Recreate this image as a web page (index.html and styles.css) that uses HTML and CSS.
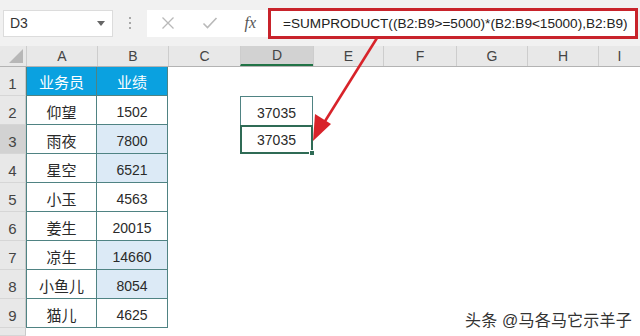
FILE: index.html
```html
<!DOCTYPE html>
<html lang="zh-CN">

<head>
    <meta charset="UTF-8">
    <meta name="viewport" content="width=device-width, initial-scale=1.0">
    <title>SUMPRODUCT</title>
    <link rel="stylesheet" href="styles.css">
</head>

<body>
    <div class="toolbar">
        <div class="namebox">
            <span>D3</span>
            <svg width="8" height="5" viewBox="0 0 8 5"><path d="M0 0h8L4 5z" fill="#666"/></svg>
        </div>
        <div class="sep">
            <i></i><i></i><i></i>
        </div>
        <div class="tools">
            <svg width="14" height="14" viewBox="0 0 14 14"><path d="M1.5 1.5l11 11M12.5 1.5l-11 11" stroke="#b9b9b9" stroke-width="1.3"/></svg>
            <svg width="16" height="14" viewBox="0 0 16 14"><path d="M1.5 7.5l4 4 9-9.5" stroke="#b9b9b9" stroke-width="1.6" fill="none"/></svg>
            <span class="fx">fx</span>
        </div>
        <div class="formula">=SUMPRODUCT((B2:B9&gt;=5000)*(B2:B9&lt;15000),B2:B9)</div>
    </div>

    <div class="sheet">
        <div class="row head">
            <div class="corner"><svg width="14" height="14" viewBox="0 0 14 14"><path d="M14 0v14H0z" fill="#b7b7b7"/></svg></div>
            <div class="col">A</div>
            <div class="col">B</div>
            <div class="col">C</div>
            <div class="col active">D</div>
            <div class="col">E</div>
            <div class="col">F</div>
            <div class="col">G</div>
            <div class="col">H</div>
            <div class="col">I</div>
        </div>
        <div class="row">
            <div class="num">1</div>
            <div class="cell th first">业务员</div>
            <div class="cell th">业绩</div>
        </div>
        <div class="row">
            <div class="num">2</div>
            <div class="cell first">仰望</div>
            <div class="cell">1502</div>
            <div class="blank"></div>
            <div class="cell result">37035</div>
        </div>
        <div class="row">
            <div class="num active">3</div>
            <div class="cell first">雨夜</div>
            <div class="cell hl">7800</div>
            <div class="blank"></div>
            <div class="cell selected">37035<span class="handle"></span></div>
        </div>
        <div class="row">
            <div class="num">4</div>
            <div class="cell first">星空</div>
            <div class="cell hl">6521</div>
        </div>
        <div class="row">
            <div class="num">5</div>
            <div class="cell first">小玉</div>
            <div class="cell">4563</div>
        </div>
        <div class="row">
            <div class="num">6</div>
            <div class="cell first">姜生</div>
            <div class="cell">20015</div>
        </div>
        <div class="row">
            <div class="num">7</div>
            <div class="cell first">凉生</div>
            <div class="cell hl">14660</div>
        </div>
        <div class="row">
            <div class="num">8</div>
            <div class="cell first">小鱼儿</div>
            <div class="cell hl">8054</div>
        </div>
        <div class="row">
            <div class="num">9</div>
            <div class="cell first">猫儿</div>
            <div class="cell">4625</div>
        </div>
        <div class="row last">
            <div class="num"></div>
        </div>
    </div>

    <svg class="arrow" width="640" height="336" viewBox="0 0 640 336">
        <path d="M377 38L322 126" stroke="#d8232a" stroke-width="2.6" fill="none"/>
        <path d="M313 141L315 114L331 124z" fill="#d8232a"/>
    </svg>

    <div class="mark">头条 @马各马它示羊子</div>
</body>

</html>
```

FILE: styles.css
```css
* {
    margin: 0;
    padding: 0;
    box-sizing: border-box;
}

body {
    position: relative;
    width: 640px;
    height: 336px;
    overflow: hidden;
    background-color: white;
    font-family: "Liberation Sans", "Noto Sans CJK SC", sans-serif;
    color: #222;
}

.toolbar {
    display: flex;
    align-items: center;
    height: 46px;
    padding-left: 3px;
    background-color: #f1f1f1;
}

.namebox {
    display: flex;
    align-items: center;
    justify-content: space-between;
    width: 110px;
    height: 27px;
    padding: 0 7px 0 6px;
    background-color: white;
    border: 1px solid #dcdcdc;
    font-size: 14px;
    color: #333;
}

.sep {
    display: flex;
    flex-direction: column;
    align-items: center;
    gap: 3px;
    width: 34px;
}

.sep i {
    width: 2px;
    height: 2px;
    background-color: #a8a8a8;
}

.tools {
    display: flex;
    align-items: center;
    justify-content: space-between;
    width: 121px;
    height: 27px;
    padding: 0 12px 0 14px;
    background-color: white;
}

.fx {
    font-family: "Liberation Serif", serif;
    font-style: italic;
    font-size: 16px;
    color: #555;
}

.formula {
    width: 370px;
    height: 31px;
    padding-left: 12px;
    line-height: 25px;
    border: 3px solid #c8232b;
    background-color: white;
    font-size: 13.6px;
    color: #222;
    white-space: nowrap;
}

.row {
    display: grid;
    grid-template-columns: 26px 71px 71px 72px 73px 70px 73px 71px 71px 42px;
    height: 29px;
}

.row.head {
    height: 21px;
    background-color: #e8e8e8;
    border-bottom: 1px solid #b3b3b3;
}

.row.last {
    height: 8px;
}

.corner {
    display: flex;
    align-items: flex-end;
    justify-content: flex-end;
    padding: 0 3px 3px 0;
}

.col {
    display: flex;
    align-items: center;
    justify-content: center;
    font-size: 14px;
    color: #444;
    border-left: 1px solid #cdcdcd;
}

.col.active {
    background-color: #d2d2d2;
    border-bottom: 2px solid #217346;
}

.num {
    display: flex;
    align-items: flex-end;
    justify-content: center;
    padding-bottom: 3px;
    background-color: #e8e8e8;
    border-bottom: 1px solid #d6d6d6;
    border-right: 1px solid #c9c9c9;
    font-size: 15px;
    color: #444;
}

.num.active {
    background-color: #d2d2d2;
}

.cell {
    display: flex;
    align-items: center;
    justify-content: center;
    padding-top: 3px;
    border-right: 1px solid #4f8383;
    border-bottom: 1px solid #4f8383;
    font-size: 14px;
    color: #2a2a2a;
}

.cell.first {
    border-left: 1px solid #4f8383;
    font-size: 15px;
}

.cell.th {
    background-color: #0aa1e0;
    color: white;
    font-size: 15px;
    padding-top: 1px;
}

.cell.hl {
    background-color: #dceaf6;
}

.cell.result {
    border: 1px solid #4f8383;
    border-bottom: none;
}

.cell.selected {
    position: relative;
    border: 2px solid #2f6b55;
    padding-top: 1px;
}

.handle {
    position: absolute;
    right: -4px;
    bottom: -4px;
    width: 6px;
    height: 6px;
    background-color: #2f6b55;
    border: 1px solid white;
}

.arrow {
    position: absolute;
    left: 0;
    top: 0;
}

.mark {
    position: absolute;
    left: 465px;
    top: 307px;
    font-size: 16px;
    color: #333;
    text-shadow: 0 0 2px white, 0 0 2px white;
    letter-spacing: 0.2px;
}
```
